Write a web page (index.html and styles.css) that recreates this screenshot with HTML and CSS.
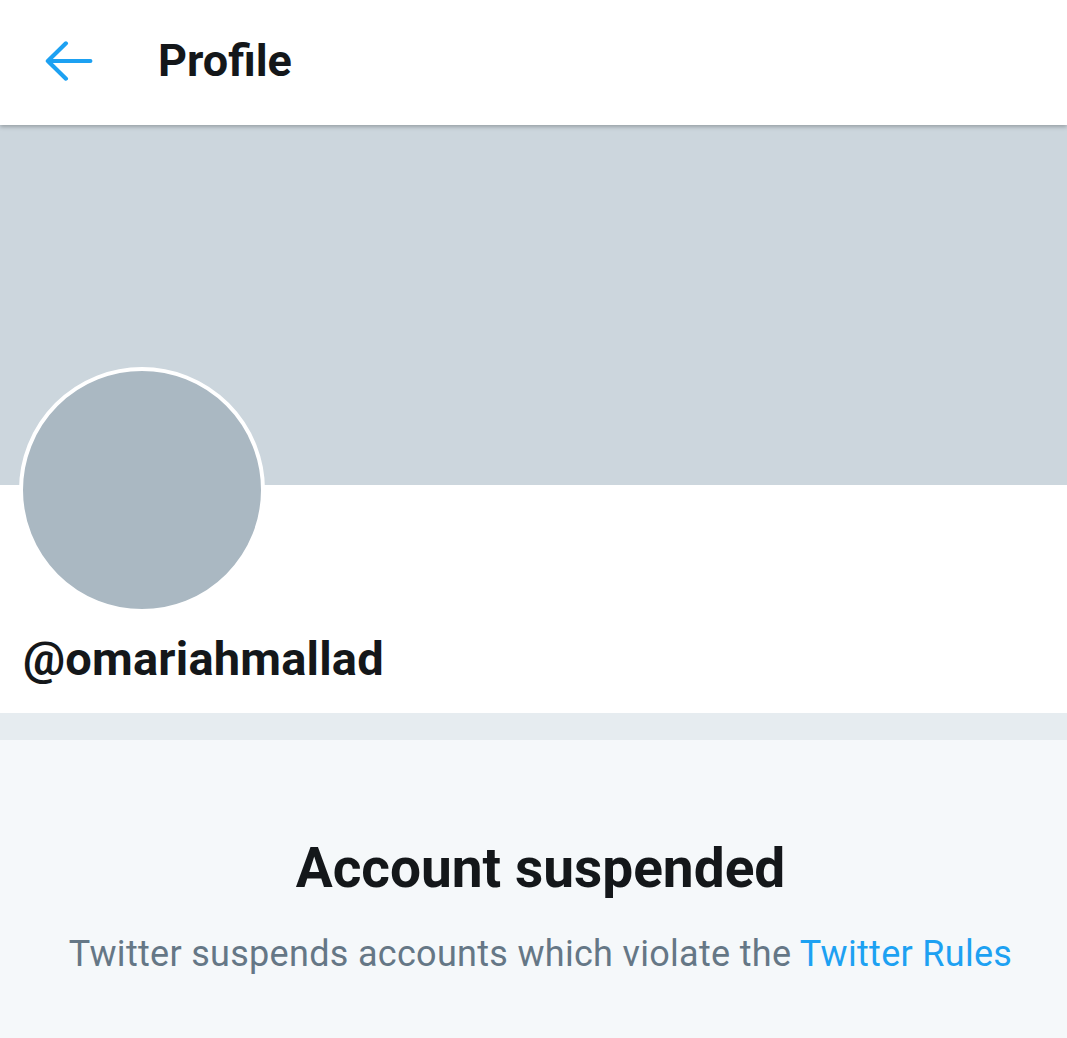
FILE: index.html
```html
<!DOCTYPE html>
<html>
<head>
	<meta name="viewport" content="width=device-width, initial-scale=1">
	<title>Profile</title>
<link rel="stylesheet" href="styles.css">
</head>
<body>

<div class="topbar">
	<svg class="back" width="48" height="48" viewBox="0 0 22 22">
		<path d="M20.8 11H1.3M9.6 2.9L1.3 11l8.3 8.1" fill="none" stroke="#1da1f2" stroke-width="1.9" stroke-linecap="round" stroke-linejoin="round"/>
	</svg>
	<h1 class="title">Profile</h1>
</div>

<div class="banner"></div>

<div class="profile">
	<div class="avatar"></div>
	<div class="handle">@omariahmallad</div>
</div>

<div class="divider"></div>

<div class="suspended">
	<h2>Account suspended</h2>
	<p>Twitter suspends accounts which violate the <a href="#">Twitter Rules</a></p>
</div>

</body>
</html>
```

FILE: styles.css
```css
body{
	margin:0;
	padding:0;
	font-family: Roboto, "Liberation Sans", sans-serif;
	background-color: #f5f8fa;
	color: #14171a;
}

.topbar{
	height:125px;
	background-color: white;
	display:flex;
	align-items:center;
	box-shadow: 0 2px 4px rgba(0,0,0,0.25);
	position:relative;
	z-index:1;
}
.back{
	margin-left:45px;
	margin-top:-3px;
}
.title{
	margin:-4px 0 0 65px;
	font-size:45px;
	font-weight:bold;
}

.banner{
	height:360px;
	background-color:#ccd6dd;
}

.profile{
	height:228px;
	background-color:white;
	padding-left:19px;
	display:flex;
	flex-direction:column;
	align-items:flex-start;
}
.avatar{
	width:238px;
	height:238px;
	border-radius:50%;
	background-color:#aab8c2;
	border:4px solid white;
	margin-top:-118px;
}
.handle{
	margin-top:18px;
	margin-left:4px;
	font-size:47px;
	font-weight:bold;
	line-height:56px;
	letter-spacing:0.2px;
}

.divider{
	height:27px;
	background-color:#e6ecf0;
}

.suspended{
	text-align:center;
	padding-top:96px;
	padding-left:14px;
}
.suspended h2{
	margin:0;
	font-size:55px;
	font-weight:bold;
	line-height:64px;
}
.suspended p{
	margin:33px 0 0 0;
	font-size:36px;
	letter-spacing:0.3px;
	color:#657786;
}
.suspended a{
	color:#1da1f2;
	text-decoration:none;
}
```
